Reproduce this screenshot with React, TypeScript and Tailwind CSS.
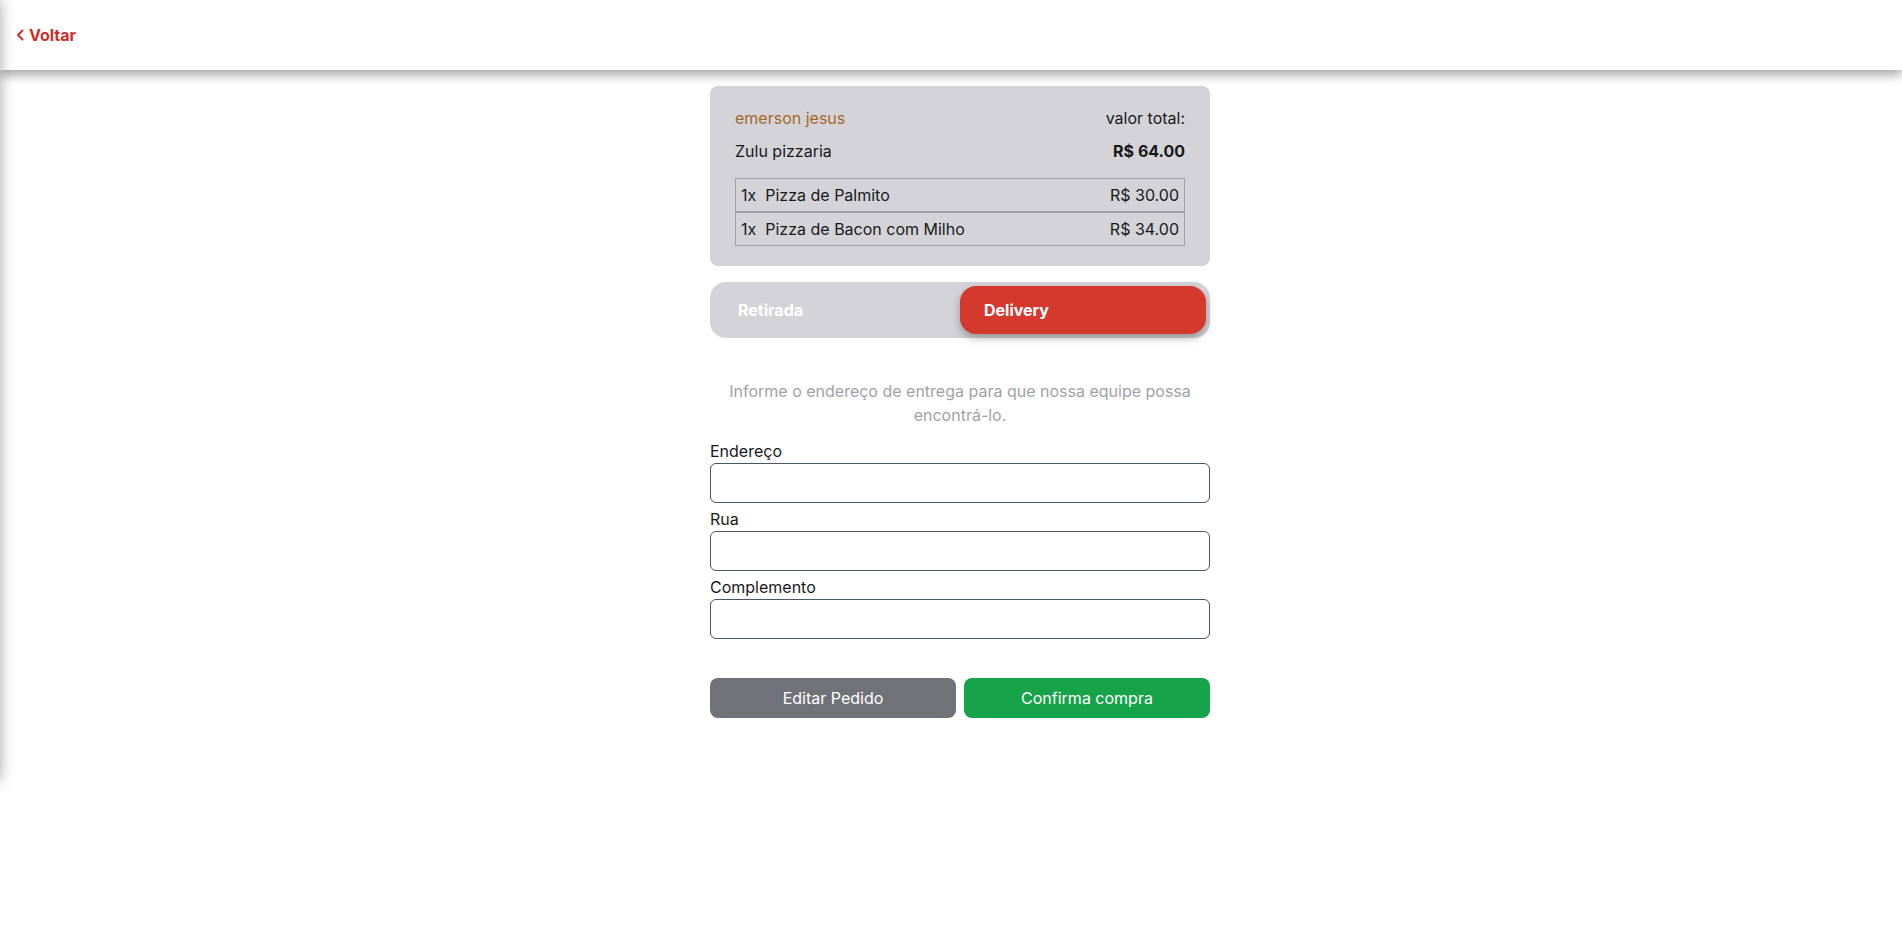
const items = [
  { qty: 1, name: 'Pizza de Palmito', price: 30 },
  { qty: 1, name: 'Pizza de Bacon com Milho', price: 34 },
];

const fields = ['Endereço', 'Rua', 'Complemento'];

export default function App() {
  const total = items.reduce((acc, i) => acc + i.qty * i.price, 0);

  return (
    <div className="relative min-h-screen bg-white text-[#18181b]" style={{ fontFamily: 'Inter, "Noto Sans", sans-serif' }}>
      {/* drawer hidden off-canvas, only its shadow shows */}
      <div className="absolute left-[-300px] top-0 z-20 h-[780px] w-[300px] bg-white shadow-[0_0_14px_rgba(0,0,0,0.35)]" />

      {/* Header */}
      <header className="relative z-10 flex h-[70px] items-center bg-white pl-[16px] shadow-[0_5px_10px_rgba(0,0,0,0.35)]">
        <button className="flex items-center gap-[5px] text-base font-bold text-[#c9302c]">
          <svg width="8" height="12" viewBox="0 0 8 12" fill="none" stroke="currentColor" strokeWidth="2" strokeLinecap="round" strokeLinejoin="round">
            <polyline points="6.5,1.5 2,6 6.5,10.5" />
          </svg>
          Voltar
        </button>
      </header>

      <div className="pl-[18px]">
        <main className="mx-auto w-[500px] pt-4">
          {/* Order summary */}
          <div className="rounded-lg bg-[#d4d4d8] px-[25px] pb-5 pt-5">
            <div className="flex items-center justify-between leading-6">
              <span className="text-[#a5662a]">emerson jesus</span>
              <span>valor total:</span>
            </div>
            <div className="mt-[9px] flex items-center justify-between leading-6">
              <span>Zulu pizzaria</span>
              <span className="font-bold">R$ {total.toFixed(2)}</span>
            </div>
            <div className="mt-[15px]">
              {items.map((item) => (
                <div key={item.name} className="flex h-[34px] items-center justify-between border border-[#a1a1aa] px-[5px]">
                  <span>
                    {item.qty}x&nbsp; {item.name}
                  </span>
                  <span>R$ {item.price.toFixed(2)}</span>
                </div>
              ))}
            </div>
          </div>

          {/* Pickup / delivery toggle */}
          <div className="mt-4 flex h-14 rounded-2xl bg-[#d4d4d8] p-1">
            <button className="flex-1 rounded-2xl px-6 text-left font-bold text-white">Retirada</button>
            <button className="flex-1 rounded-2xl bg-[#d5392d] px-6 text-left font-bold text-white shadow-[0_4px_8px_rgba(0,0,0,0.3)]">
              Delivery
            </button>
          </div>

          <p className="mt-[41px] px-4 text-center leading-6 text-[#a1a1aa]">
            Informe o endereço de entrega para que nossa equipe possa encontrá-lo.
          </p>

          <form className="mt-3 flex flex-col gap-1">
            {fields.map((f) => (
              <label key={f} className="flex flex-col leading-6">
                {f}
                <input className="h-10 rounded-md border border-[#4b5563] bg-white px-3 outline-none" />
              </label>
            ))}
          </form>

          <div className="mt-[39px] flex gap-2">
            <button className="h-10 flex-1 rounded-lg bg-[#71717a] text-white">Editar Pedido</button>
            <button className="h-10 flex-1 rounded-lg bg-[#16a34a] text-white">Confirma compra</button>
          </div>
        </main>
      </div>
    </div>
  );
}
